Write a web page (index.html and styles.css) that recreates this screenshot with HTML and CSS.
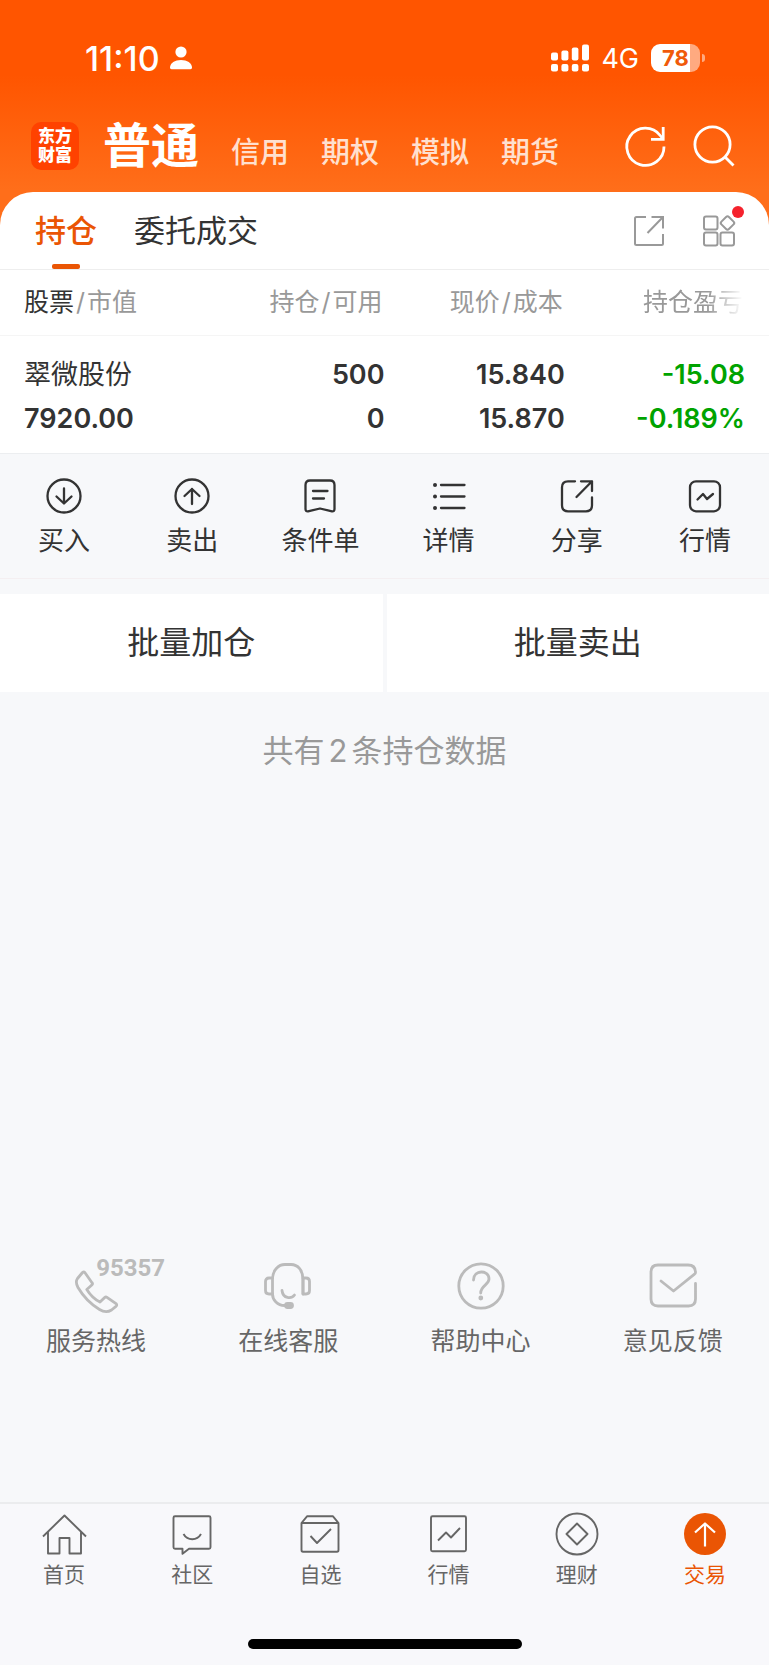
FILE: index.html
```
<!DOCTYPE html>
<html lang="zh-CN">
<head>
    <meta charset="UTF-8">
    <meta name="viewport" content="width=device-width, initial-scale=1.0">
    <title>交易 - 持仓</title>
    <link rel="stylesheet" href="styles.css">
</head>
<body>
    <header class="top">
        <div class="status-bar">
            <span class="time">11:10</span>
            <svg class="person" width="22" height="24" viewBox="0 0 22 24" fill="#fff">
                <circle cx="11" cy="6" r="5.6"/>
                <path d="M0 21.5C0 17 5 14 11 14s11 3 11 7.500c0 1-.6 1.700-1.600 1.700H1.600C.6 23.200 0 22.500 0 21.500z"/>
            </svg>
            <div class="status-right">
                <svg width="38" height="28" viewBox="0 0 38 28" fill="#fff">
                    <rect x="0" y="8.500" width="7" height="8" rx="2"/>
                    <rect x="10.400" y="6.500" width="7" height="10" rx="2"/>
                    <rect x="20.800" y="3.500" width="6.600" height="13" rx="2"/>
                    <rect x="31" y="0.500" width="7" height="16" rx="2"/>
                    <rect x="0" y="20" width="7" height="7.500" rx="2"/>
                    <rect x="10.400" y="20" width="7" height="7.500" rx="2"/>
                    <rect x="20.800" y="20" width="6.600" height="7.500" rx="2"/>
                    <rect x="31" y="20" width="7" height="7.500" rx="2"/>
                </svg>
                <span class="network">4G</span>
                <span class="battery">78</span>
            </div>
        </div>
        <div class="account-bar">
            <div class="logo">东方<br>财富</div>
            <nav class="account-tabs">
                <button class="account-tab active">普通</button>
                <button class="account-tab">信用</button>
                <button class="account-tab">期权</button>
                <button class="account-tab">模拟</button>
                <button class="account-tab">期货</button>
            </nav>
            <div class="account-tools">
                <button class="icon-btn" aria-label="刷新">
                    <svg width="42" height="42" viewBox="0 0 42 42" fill="none" stroke="#fff" stroke-width="2.800">
                        <path d="M39 21.500A18.600 18.600 0 1 1 35.200 10.500L38 14"/>
                        <path d="M38.200 2v12.300H26"/>
                    </svg>
                </button>
                <button class="icon-btn" aria-label="搜索">
                    <svg width="42" height="42" viewBox="0 0 42 42" fill="none" stroke="#fff" stroke-width="2.800">
                        <circle cx="19.500" cy="19.500" r="17.600"/>
                        <path d="M31.500 31.500l9 9"/>
                    </svg>
                </button>
            </div>
        </div>
    </header>

    <main class="content">
        <section class="card">
            <div class="sub-bar">
                <button class="sub-tab active">持仓</button>
                <button class="sub-tab">委托成交</button>
                <div class="sub-tools">
                    <button class="icon-btn" aria-label="分享">
                        <svg width="30" height="30" viewBox="0 0 30 30" fill="none" stroke="#999" stroke-width="2">
                            <path d="M12 1H2.500Q1 1 1 2.500v25Q1 29 2.500 29h25q1.500 0 1.500-1.500V18"/>
                            <path d="M17.500 1H29v11.500M29 1L13.500 17"/>
                        </svg>
                    </button>
                    <button class="icon-btn has-dot" aria-label="更多功能">
                        <svg width="32" height="32" viewBox="0 0 32 32" fill="none" stroke="#999" stroke-width="2">
                            <rect x="1" y="1.500" width="13.500" height="13" rx="2"/>
                            <rect x="1" y="17.500" width="13.500" height="13" rx="2"/>
                            <rect x="17.500" y="17.500" width="13.500" height="13" rx="2"/>
                            <rect x="19.200" y="2.700" width="10.600" height="10.600" rx="2" transform="rotate(45 24.500 8)"/>
                        </svg>
                    </button>
                </div>
            </div>
            <table class="holdings">
                <thead>
                    <tr>
                        <th><b>股票</b><i>/</i>市值</th>
                        <th>持仓<i>/</i>可用</th>
                        <th>现价<i>/</i>成本</th>
                        <th><span class="fade">持仓盈亏</span></th>
                    </tr>
                </thead>
                <tbody>
                    <tr>
                        <td><div class="name">翠微股份</div><div>7920.00</div></td>
                        <td><div>500</div><div>0</div></td>
                        <td><div>15.840</div><div>15.870</div></td>
                        <td class="down"><div>-15.08</div><div>-0.189%</div></td>
                    </tr>
                </tbody>
            </table>
        </section>

        <div class="actions">
            <button class="action">
                <svg width="36" height="36" viewBox="0 0 36 36">
                    <circle cx="18" cy="18" r="16.500"/>
                    <path d="M18 10.500v15M10.500 18.500l7.500 7 7.500-7"/>
                </svg>
                买入
            </button>
            <button class="action">
                <svg width="36" height="36" viewBox="0 0 36 36">
                    <circle cx="18" cy="18" r="16.500"/>
                    <path d="M18 26V11M10.500 18l7.500-7 7.500 7"/>
                </svg>
                卖出
            </button>
            <button class="action">
                <svg width="36" height="36" viewBox="0 0 36 36">
                    <path d="M8 2.500h20q4.500 0 4.500 4.500v24q0 2.500-2.500 2.300L18 30.500 6 33.300q-2.500.2-2.500-2.300V7Q3.500 2.500 8 2.500z"/>
                    <path d="M11 13h14.500M11 20.500h11"/>
                </svg>
                条件单
            </button>
            <button class="action">
                <svg width="36" height="36" viewBox="0 0 36 36">
                    <path d="M10 7h23.500M10 18.500h23.500M10 30h23.500"/>
                    <path class="dots" d="M4 7h.01M4 18.500h.01M4 30h.01"/>
                </svg>
                详情
            </button>
            <button class="action">
                <svg width="36" height="36" viewBox="0 0 36 36">
                    <path d="M16 3.300H9Q3 3.300 3 9.300v18q0 6 6 6h18q6 0 6-6V19.500"/>
                    <path d="M22 3.300h11V13M33 3.300L17.500 19"/>
                </svg>
                分享
            </button>
            <button class="action">
                <svg width="36" height="36" viewBox="0 0 36 36">
                    <rect x="3" y="3.300" width="30" height="30" rx="6"/>
                    <path d="M10.500 21.500l5.500-5.500 4 5 6-5"/>
                </svg>
                行情
            </button>
        </div>

        <div class="batch">
            <button class="batch-btn">批量加仓</button>
            <button class="batch-btn">批量卖出</button>
        </div>

        <p class="summary">共有<span>2</span>条持仓数据</p>

        <div class="services">
            <a class="service" href="#">
                <span class="hotline">
                    <svg width="48" height="48" viewBox="0 0 48 48">
                        <path d="M10.500 10.500L5.500 16.500q-2.500 3.500.5 9C11 34 18.500 42 27.500 47.500q6.500 4 12 .5l4.500-3.700q1.500-1.300 0-2.700l-9-6.300q-1.200-.8-2.300.3l-4.700 4.500Q20 36 14.800 27.500l5-4.500q1.200-1 .2-2.300l-7-10q-1.200-1.300-2.500-.2z"/>
                    </svg>
                    <span class="phone-number">95357</span>
                </span>
                服务热线
            </a>
            <a class="service" href="#">
                <svg width="48" height="48" viewBox="0 0 48 48">
                    <path d="M8.500 32V17.500C8.500 8 14.500 2.500 21 2.500h6c7 0 12 6 12 15V32"/>
                    <path d="M8.500 16H5q-3.500 0-3.500 3.500v9Q1.500 32 5 32h3.500c0 6 5 11.500 12 11.500M39 16h3q3.500 0 3.500 3.500v9q0 3.500-3.500 3.500h-3z"/>
                    <path d="M18 28.500c1 8.500 9.500 8.500 12.500 4.500"/>
                    <rect class="solid" x="21.500" y="41.500" width="7" height="4" rx="2"/>
                </svg>
                在线客服
            </a>
            <a class="service" href="#">
                <svg width="48" height="48" viewBox="0 0 48 48">
                    <circle cx="24" cy="24" r="22.200"/>
                    <path d="M16.500 18c0-10.500 15.500-10.500 15.500-1 0 6-8.300 6.500-8.300 14"/>
                    <circle class="solid" cx="23.800" cy="36" r="1"/>
                </svg>
                帮助中心
            </a>
            <a class="service" href="#">
                <svg width="48" height="48" viewBox="0 0 48 48">
                    <path d="M46.500 21.500V37q0 7-7 7H9q-7 0-7-7V10q0-7 7-7h30q7.500 0 7.500 7.500 0 1-1 1.700L24.500 29 12 19"/>
                </svg>
                意见反馈
            </a>
        </div>
    </main>

    <footer class="tab-bar">
        <nav class="tabs">
            <a class="tab" href="#">
                <svg width="44" height="44" viewBox="0 0 44 44">
                    <path d="M1 24.500L22.500 3.500 44 24.500M6 20v21.500h11.500V26h10v15.500H39V20"/>
                </svg>
                首页
            </a>
            <a class="tab" href="#">
                <svg width="44" height="44" viewBox="0 0 44 44">
                    <path d="M5 4.300h34q1.500 0 1.500 1.500v29.500q0 1.500-1.500 1.500H19l-6.500 5v-5H5q-1.500 0-1.500-1.500V5.800q0-1.500 1.500-1.500z"/>
                    <path d="M13.500 22c4 7 13.500 7 17.500 0"/>
                </svg>
                社区
            </a>
            <a class="tab" href="#">
                <svg width="44" height="44" viewBox="0 0 44 44">
                    <path d="M3.500 11L9 4.300h26l5.500 6.700v27q0 1.700-1.500 1.700H5q-1.500 0-1.500-1.700zM3.500 11h37M12.500 24l6.500 7 14-14"/>
                </svg>
                自选
            </a>
            <a class="tab" href="#">
                <svg width="44" height="44" viewBox="0 0 44 44">
                    <rect x="4" y="4.300" width="35" height="35" rx="1.500"/>
                    <path d="M11 28.500l8-8 5 5 9-9.500"/>
                </svg>
                行情
            </a>
            <a class="tab" href="#">
                <svg width="44" height="44" viewBox="0 0 44 44">
                    <circle cx="22" cy="22" r="20.500"/>
                    <path d="M22 11.500L32.500 22 22 32.500 11.500 22z"/>
                </svg>
                理财
            </a>
            <a class="tab active" href="#">
                <svg width="44" height="44" viewBox="0 0 44 44">
                    <circle cx="22" cy="22" r="21"/>
                    <path d="M22 34.500V11.500M12 20.500l10-9 10 9"/>
                </svg>
                交易
            </a>
        </nav>
        <div class="home-indicator"></div>
    </footer>
</body>
</html>
```
FILE: styles.css
```
* {
    box-sizing: border-box;
}

body {
    margin: 0;
    min-height: 100vh;
    display: flex;
    flex-direction: column;
    font-family: Inter, "Noto Sans CJK SC", sans-serif;
    color: #333;
    background-color: #f7f8fa;
}

button {
    padding: 0;
    border: none;
    background: none;
    font-family: inherit;
    color: inherit;
    cursor: pointer;
}

a {
    color: inherit;
    text-decoration: none;
}

svg {
    display: block;
    flex: none;
    overflow: visible;
}

/* header */
.top {
    padding: 38px 34px 55px 31px;
    margin-bottom: -33px;
    background: linear-gradient(#ff5500 75px, #ff6e1a 190px);
    color: #fff;
}

.status-bar {
    display: flex;
    align-items: center;
    height: 40px;
    padding-left: 54px;
    padding-right: 35px;
}

.time {
    font-size: 34px;
    font-weight: 500;
}

.person {
    margin-left: 10px;
}

.status-right {
    display: flex;
    align-items: center;
    gap: 12px;
    margin-left: auto;
}

.network {
    font-size: 27px;
}

.battery {
    position: relative;
    width: 49px;
    height: 28px;
    border-radius: 9px;
    background: linear-gradient(to right, #fff 80%, #ffaa80 80%);
    color: #f05a0a;
    font-size: 22px;
    font-weight: 700;
    line-height: 28px;
    text-align: center;
}

.battery::after {
    content: "";
    position: absolute;
    right: -5px;
    top: 10px;
    width: 3px;
    height: 8px;
    border-radius: 0 4px 4px 0;
    background-color: #ffaa80;
}

.account-bar {
    display: flex;
    align-items: center;
    margin-top: 44px;
}

.logo {
    width: 48px;
    height: 48px;
    padding-top: 5px;
    border-radius: 10px;
    background-color: #ff4200;
    font-size: 17px;
    font-weight: 900;
    line-height: 19px;
    text-align: center;
}

.account-tabs {
    display: flex;
    align-items: flex-end;
    gap: 32px;
    margin-left: 24px;
}

.account-tab {
    font-size: 29px;
    font-weight: 500;
    line-height: 34px;
    color: #ffe0cf;
}

.account-tab.active {
    font-size: 48px;
    font-weight: 700;
    line-height: 48px;
    color: #fff;
}

.account-tools {
    display: flex;
    gap: 26px;
    margin-left: auto;
}

/* holdings */
.content {
    flex: 1;
    display: flex;
    flex-direction: column;
}

.card {
    border-radius: 33px 33px 0 0;
    background-color: #fff;
}

.sub-bar {
    display: flex;
    align-items: center;
    gap: 37px;
    padding: 0 34px 0 35px;
    border-bottom: 1px solid #eee;
}

.sub-tab {
    position: relative;
    font-size: 31px;
    line-height: 77px;
}

.sub-tab.active {
    font-weight: 500;
    color: #ea5504;
}

.sub-tab.active::after {
    content: "";
    position: absolute;
    left: 50%;
    bottom: 0;
    width: 28px;
    height: 5px;
    margin-left: -14px;
    border-radius: 2px;
    background-color: #ea5504;
}

.sub-tools {
    display: flex;
    align-items: center;
    gap: 39px;
    margin-left: auto;
}

.has-dot {
    position: relative;
}

.has-dot::after {
    content: "";
    position: absolute;
    top: -9px;
    right: -9px;
    width: 12px;
    height: 12px;
    border-radius: 50%;
    background-color: #f5222d;
}

.holdings {
    width: 100%;
    padding: 0 24px;
    border-spacing: 0;
    table-layout: fixed;
    background: linear-gradient(#f5f5f5, #f5f5f5) 0 65px / 100% 1px no-repeat;
    border-bottom: 1px solid #eceef0;
}

.holdings th,
.holdings td {
    padding: 0;
    text-align: right;
}

.holdings th:first-child,
.holdings td:first-child {
    text-align: left;
}

.holdings th {
    padding: 0 2px 2px 0;
    font-size: 25px;
    font-weight: 400;
    line-height: 64px;
    color: #999;
    white-space: nowrap;
}

.holdings th b {
    font-weight: 400;
    color: #333;
}

.holdings th i {
    margin: 0 2px;
    font-style: normal;
}

.fade {
    -webkit-mask-image: linear-gradient(to right, #000 65%, transparent);
    mask-image: linear-gradient(to right, #000 65%, transparent);
}

.holdings td {
    padding: 17px 0 12px;
    font-size: 27px;
    font-weight: 600;
    line-height: 44px;
}

.holdings .name {
    font-weight: 400;
}

.holdings .down {
    color: #00a300;
}

/* row actions */
.actions {
    display: grid;
    grid-template-columns: repeat(6, 1fr);
    padding: 24px 0 20px;
    border-bottom: 1px solid #f4eff1;
}

.action {
    display: flex;
    flex-direction: column;
    align-items: center;
    gap: 10px;
    font-size: 26px;
    line-height: 34px;
}

.action svg {
    fill: none;
    stroke: #333;
    stroke-width: 2.3;
    stroke-linecap: round;
    stroke-linejoin: round;
}

.action .dots {
    stroke-width: 4;
}

.batch {
    display: grid;
    grid-template-columns: 1fr 1fr;
    gap: 4px;
    margin-top: 15px;
}

.batch-btn {
    background-color: #fff;
    font-size: 32px;
    line-height: 98px;
}

.summary {
    margin: 39px 0 0;
    font-size: 31px;
    line-height: 40px;
    text-align: center;
    color: #999;
}

.summary span {
    margin: 0 4px;
}

/* service links */
.services {
    display: grid;
    grid-template-columns: repeat(4, 1fr);
    margin-top: auto;
    padding-bottom: 144px;
}

.service {
    display: flex;
    flex-direction: column;
    align-items: center;
    gap: 14px;
    font-size: 25px;
    line-height: 34px;
    color: #666;
}

.service svg {
    fill: none;
    stroke: #bbb;
    stroke-width: 2.8;
    stroke-linecap: round;
    stroke-linejoin: round;
}

.service .solid {
    fill: #bbb;
}

.hotline {
    position: relative;
}

.phone-number {
    position: absolute;
    left: 24px;
    top: -6px;
    font-family: Roboto, sans-serif;
    font-size: 24px;
    font-weight: 700;
    line-height: 24px;
    color: #bbb;
}

/* bottom tab bar */
.tab-bar {
    padding: 8px 0 16px;
    border-top: 2px solid #ebecee;
    background-color: #f8f8fb;
}

.tabs {
    display: grid;
    grid-template-columns: repeat(6, 1fr);
}

.tab {
    display: flex;
    flex-direction: column;
    align-items: center;
    gap: 5px;
    font-size: 21px;
    line-height: 28px;
    color: #666;
}

.tab svg {
    fill: none;
    stroke: #666;
    stroke-width: 1.9;
    stroke-linejoin: round;
}

.tab.active {
    color: #ea5504;
}

.tab.active svg {
    stroke: #fff;
    stroke-width: 2.2;
}

.tab.active circle {
    fill: #ea5504;
    stroke: none;
}

.home-indicator {
    width: 274px;
    height: 10px;
    margin: 50px auto 0;
    border-radius: 5px;
    background-color: #000;
}
```
